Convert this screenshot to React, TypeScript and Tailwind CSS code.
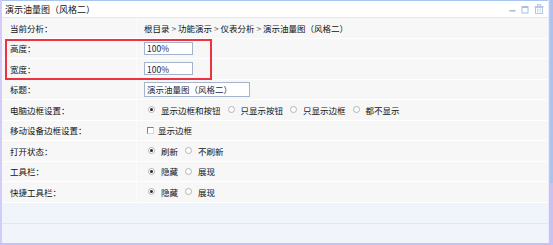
const font = { fontFamily: '"Noto Sans CJK SC", "Noto Sans", sans-serif' };

type Opt = { label: string; checked?: boolean };

const Radio = ({ checked }: { checked?: boolean }) => (
  <span className="ml-[4px] mr-[6px] flex h-[7px] w-[7px] shrink-0 items-center justify-center rounded-full border border-[#b4b4b4] bg-white">
    {checked && <span className="h-[3px] w-[3px] rounded-full bg-[#2a2a2a]" />}
  </span>
);

const RadioGroup = ({ options }: { options: Opt[] }) => (
  <div className="flex items-center">
    {options.map((o) => (
      <div key={o.label} className="mr-[3px] flex items-center">
        <Radio checked={o.checked} />
        <span>{o.label}</span>
      </div>
    ))}
  </div>
);

const Row = ({ label, children }: { label: string; children?: React.ReactNode }) => (
  <div className="flex h-[20.5px] border-b border-white bg-[#f7f7f7]">
    <div className="flex w-[134px] shrink-0 items-center pl-[8px]">{label}</div>
    <div className="flex flex-1 items-center border-l border-[#fbfbfb] pl-[7px]">{children}</div>
  </div>
);

const TextBox = ({ value, w }: { value: string; w: string }) => (
  <div className={`flex h-[13px] items-center border border-[#a3b4cc] bg-white pl-[2px] text-[#1c1c3c] ${w}`}>
    {value}
  </div>
);

export default function App() {
  return (
    <div className="relative flex h-[245px] w-[553px] flex-col bg-[#cbc3f5] text-[8.5px] leading-none text-[#111]" style={font}>
      <div className="flex flex-1">
        <div className="w-[2px] bg-[#d3ccf8]" />
        <div className="flex flex-1 flex-col border-t border-[#a9c6ee] bg-[#f7f7f7]">
          <div className="flex h-[17px] items-center justify-between border-b border-[#dfeaf7] bg-white pl-[3px] pr-[4px] text-[9px]">
            <span>演示油量图（风格二）</span>
            <div className="flex items-center gap-[5px]">
              <svg width="7" height="9" viewBox="0 0 7 9">
                <rect x="0.5" y="5" width="6" height="1.5" fill="#9fbadb" />
              </svg>
              <svg width="8" height="9" viewBox="0 0 8 9">
                <rect x="1" y="1.5" width="6" height="6.5" fill="none" stroke="#a7c0de" />
                <rect x="1" y="1.5" width="6" height="1.5" fill="#a7c0de" />
              </svg>
              <svg width="10" height="10" viewBox="0 0 10 10">
                <rect x="3.5" y="0.5" width="3" height="1.5" fill="none" stroke="#b3c8e2" strokeWidth="0.8" />
                <rect x="0.5" y="2" width="9" height="1.5" fill="#b3c8e2" />
                <rect x="1.5" y="3.5" width="7" height="6" fill="none" stroke="#b3c8e2" />
                <path d="M3.5 4.5v4M5 4.5v4M6.5 4.5v4" stroke="#c5d6ea" strokeWidth="0.7" />
              </svg>
            </div>
          </div>

          <Row label="当前分析：">
            <span>
              根目录 <span className="text-[#666]">&gt;</span> 功能演示 <span className="text-[#666]">&gt;</span> 仪表分析{' '}
              <span className="text-[#666]">&gt;</span> 演示油量图（风格二）
            </span>
          </Row>
          <Row label="高度：">
            <TextBox value="100%" w="w-[49px]" />
          </Row>
          <Row label="宽度：">
            <TextBox value="100%" w="w-[49px]" />
          </Row>
          <Row label="标题：">
            <TextBox value="演示油量图（风格二）" w="w-[106px] h-[15px]" />
          </Row>
          <Row label="电脑边框设置：">
            <RadioGroup
              options={[
                { label: '显示边框和按钮', checked: true },
                { label: '只显示按钮' },
                { label: '只显示边框' },
                { label: '都不显示' },
              ]}
            />
          </Row>
          <Row label="移动设备边框设置：">
            <span className="ml-[3px] mr-[4px] h-[7px] w-[7px] border border-t-[#808080] border-l-[#808080] border-r-[#d8d8d8] border-b-[#d8d8d8] bg-white" />
            <span>显示边框</span>
          </Row>
          <Row label="打开状态：">
            <RadioGroup options={[{ label: '刷新', checked: true }, { label: '不刷新' }]} />
          </Row>
          <Row label="工具栏：">
            <RadioGroup options={[{ label: '隐藏', checked: true }, { label: '展现' }]} />
          </Row>
          <Row label="快捷工具栏：">
            <RadioGroup options={[{ label: '隐藏', checked: true }, { label: '展现' }]} />
          </Row>

          <div className="h-[21px] border-b border-[#dde6fb] bg-[#f0f4fb]" />
          <div className="flex-1 bg-[#f1f4fb]" />
        </div>
        <div className="w-[1px] bg-[#ecebf8]" />
        <div className="flex w-[4px] flex-col bg-[#c9c1f4]">
          <div className="ml-[1px] h-[183px] w-[3px] bg-[#aec2f0]" />
        </div>
      </div>
      <div className="h-[2px] bg-[#c9c1f4]" />

      <div className="pointer-events-none absolute left-[5px] top-[39px] h-[41px] w-[207px] border-2 border-[#ee3340]" />
    </div>
  );
}
